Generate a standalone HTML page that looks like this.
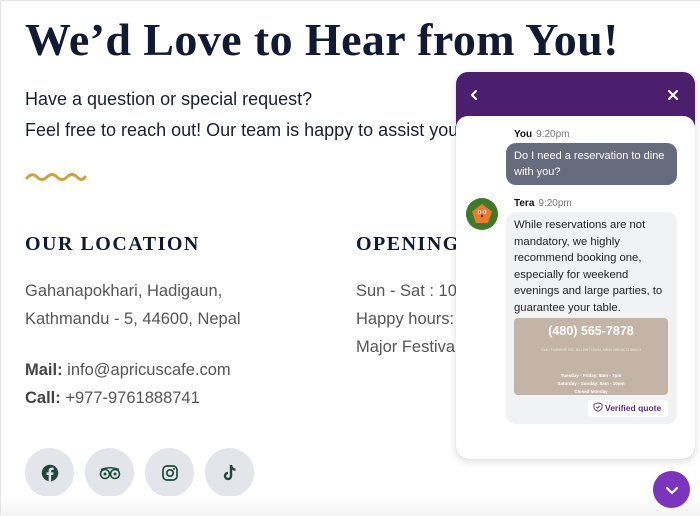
<!DOCTYPE html>
<html><head><meta charset="utf-8"><style>
*{margin:0;padding:0;box-sizing:border-box}
body{width:700px;height:515px;overflow:hidden;background:#fff;font-family:"Liberation Sans",sans-serif;position:relative;border-left:1px solid #e3e3e3;border-top:1px solid #e3e3e3}
.abs{position:absolute}
h1{position:absolute;left:24px;top:12px;font-family:"Liberation Serif",serif;font-weight:bold;font-size:46px;color:#111a33;white-space:nowrap;letter-spacing:0.4px}
.p{font-size:18px;color:#1a1f2e;white-space:nowrap}
.h2{font-family:"Liberation Serif",serif;font-weight:bold;font-size:20px;letter-spacing:1.5px;color:#111a33;white-space:nowrap}
.t{font-size:16.5px;color:#555;line-height:28px;white-space:nowrap}
.t b{color:#444}
.soc{position:absolute;top:447px;width:49px;height:49px;border-radius:50%;background:#e3e5ea;display:flex;align-items:center;justify-content:center}
.chat{left:455px;top:71px;width:239px;height:387px;border-radius:12px;background:#4b1f6e;box-shadow:0 2px 8px rgba(0,0,0,.15);overflow:hidden}
.body{position:absolute;left:0;top:44px;width:239px;height:343px;background:#fff;border-radius:12px 12px 0 0}
.name{font-size:10px;color:#111;font-weight:bold}
.name span{font-weight:normal;color:#777;margin-left:4px}
</style></head><body>
<h1>We’d Love to Hear from You!</h1>
<div class="abs p" style="left:24px;top:88px">Have a question or special request?</div>
<div class="abs p" style="left:24px;top:119px">Feel free to reach out! Our team is happy to assist you.</div>
<svg class="abs" style="left:24px;top:170px" width="62" height="12"><path d="M2 7 Q7 1 12 6 T22 6 T32 6 T42 6 T52 6 T60 6" fill="none" stroke="#c9a444" stroke-width="3" stroke-linecap="round"/></svg>
<div class="abs h2" style="left:24px;top:232px">OUR LOCATION</div>
<div class="abs h2" style="left:355px;top:232px">OPENING HOURS</div>
<div class="abs t" style="left:24px;top:276px">Gahanapokhari, Hadigaun,<br>Kathmandu - 5, 44600, Nepal</div>
<div class="abs t" style="left:24px;top:355px"><b>Mail:</b> info@apricuscafe.com<br><b>Call:</b> +977-9761888741</div>
<div class="abs t" style="left:355px;top:276px">Sun - Sat : 10 AM - 10 PM<br>Happy hours: 4 PM - 7 PM<br>Major Festivals: Closed</div>
<div class="soc" style="left:24px"><svg width="18" height="18" viewBox="0 0 24 24"><circle cx="12" cy="12" r="11" fill="#1d4a3a"/><path d="M13.5 23V14.5h2.8l.4-3.2h-3.2V9.3c0-.9.3-1.5 1.6-1.5h1.7V5c-.3 0-1.3-.1-2.5-.1-2.5 0-4.1 1.5-4.1 4.2v2.3H7.4v3.2h2.8V23z" fill="#e3e5ea"/></svg></div>
<div class="soc" style="left:84px"><svg width="22" height="14" viewBox="0 0 22 14"><circle cx="6" cy="8" r="4.5" fill="none" stroke="#1d4a3a" stroke-width="1.6"/><circle cx="16" cy="8" r="4.5" fill="none" stroke="#1d4a3a" stroke-width="1.6"/><circle cx="6" cy="8" r="1.5" fill="#1d4a3a"/><circle cx="16" cy="8" r="1.5" fill="#1d4a3a"/><path d="M2 3.5 Q11 0 20 3.5" fill="none" stroke="#1d4a3a" stroke-width="1.6"/></svg></div>
<div class="soc" style="left:144px"><svg width="16" height="16" viewBox="0 0 16 16"><rect x="1" y="1" width="14" height="14" rx="4" fill="none" stroke="#1d4a3a" stroke-width="1.7"/><circle cx="8" cy="8" r="3.2" fill="none" stroke="#1d4a3a" stroke-width="1.7"/><circle cx="12" cy="4" r="1" fill="#1d4a3a"/></svg></div>
<div class="soc" style="left:204px"><svg width="16" height="18" viewBox="0 0 16 18"><path d="M9 1v11a3 3 0 1 1-3-3" fill="none" stroke="#1d4a3a" stroke-width="2.4"/><path d="M9 1.5c.5 2.5 2 4 4.5 4.2" fill="none" stroke="#1d4a3a" stroke-width="2.4"/></svg></div>
<div class="abs" style="left:0;top:495px;width:700px;height:20px;background:linear-gradient(#fff,#f3f3f3)"></div>

<div class="abs chat">
<svg class="abs" style="left:13px;top:17px" width="10" height="12"><path d="M7 2L3 6l4 4" fill="none" stroke="#fff" stroke-width="2" stroke-linecap="round" stroke-linejoin="round"/></svg>
<svg class="abs" style="left:211px;top:17px" width="12" height="12"><path d="M2 2l8 8M10 2l-8 8" stroke="#fff" stroke-width="2" stroke-linecap="round"/></svg>
<div class="body">
<div class="abs name" style="left:58px;top:13px">You<span>9:20pm</span></div>
<div class="abs" style="left:50px;top:27px;width:171px;height:42px;background:#676b7e;border-radius:10px;color:#fff;font-size:11px;line-height:16px;padding:5px 8px">Do I need a reservation to dine with you?</div>
<div class="abs" style="left:10px;top:82px;width:32px;height:32px;border-radius:50%;background:#3f7a2a;display:flex;align-items:center;justify-content:center"><svg width="22" height="22" viewBox="0 0 22 22"><path d="M11 1L21 8.5 17 20H5L1 8.5z" fill="#ef7a2a"/><circle cx="8.5" cy="9" r="1.7" fill="#fff"/><circle cx="13.5" cy="9" r="1.7" fill="#fff"/><circle cx="8.5" cy="9" r=".8" fill="#222"/><circle cx="13.5" cy="9" r=".8" fill="#222"/><ellipse cx="11" cy="13" rx="1" ry="1.3" fill="#222"/></svg></div>
<div class="abs name" style="left:58px;top:82px">Tera<span>9:20pm</span></div>
<div class="abs" style="left:50px;top:96px;width:171px;height:212px;background:#f1f2f4;border-radius:10px;padding:5px 8px;font-size:11.3px;line-height:16.5px;color:#222">While reservations are not mandatory, we highly recommend booking one, especially for weekend evenings and large parties, to guarantee your table.
<div style="position:absolute;left:8px;top:106px;width:154px;height:77px;background:#c4b4a6;border-radius:4px;text-align:center;color:#fff">
<div style="font-size:12.5px;font-weight:bold;margin-top:5px">(480) 565-7878</div>
<div style="font-size:4px;opacity:.7;margin-top:2px">4140 PARKER RD. ALLENTOWN, NEW MEXICO 56874</div>
<div style="font-size:4.5px;font-weight:bold;line-height:8px;margin-top:14px">Tuesday - Friday: 8am - 7pm<br>Saturday - Sunday: 8am - 10pm<br>Closed Monday</div></div>
<div style="position:absolute;left:82px;top:188px;width:80px;height:17px;background:#fff;border-radius:3px;font-size:8.5px;font-weight:bold;color:#5a2d82;line-height:17px;padding-left:5px;white-space:nowrap"><svg width="10" height="10" viewBox="0 0 10 10" style="vertical-align:-1px;margin-right:2px"><path d="M5 .8L9 2.2v3c0 2-2 3.5-4 4-2-.5-4-2-4-4v-3z" fill="none" stroke="#5a2d82" stroke-width=".9"/><path d="M3.3 5l1.2 1.2 2.2-2.2" fill="none" stroke="#5a2d82" stroke-width=".9"/></svg>Verified quote</div>
</div>
</div>
</div>
<div class="abs" style="left:652px;top:470px;width:37px;height:37px;border-radius:50%;background:#7b35bd;display:flex;align-items:center;justify-content:center"><svg width="14" height="10"><path d="M2 3l5 5 5-5" fill="none" stroke="#fff" stroke-width="2.2" stroke-linecap="round" stroke-linejoin="round"/></svg></div>
</body></html>
